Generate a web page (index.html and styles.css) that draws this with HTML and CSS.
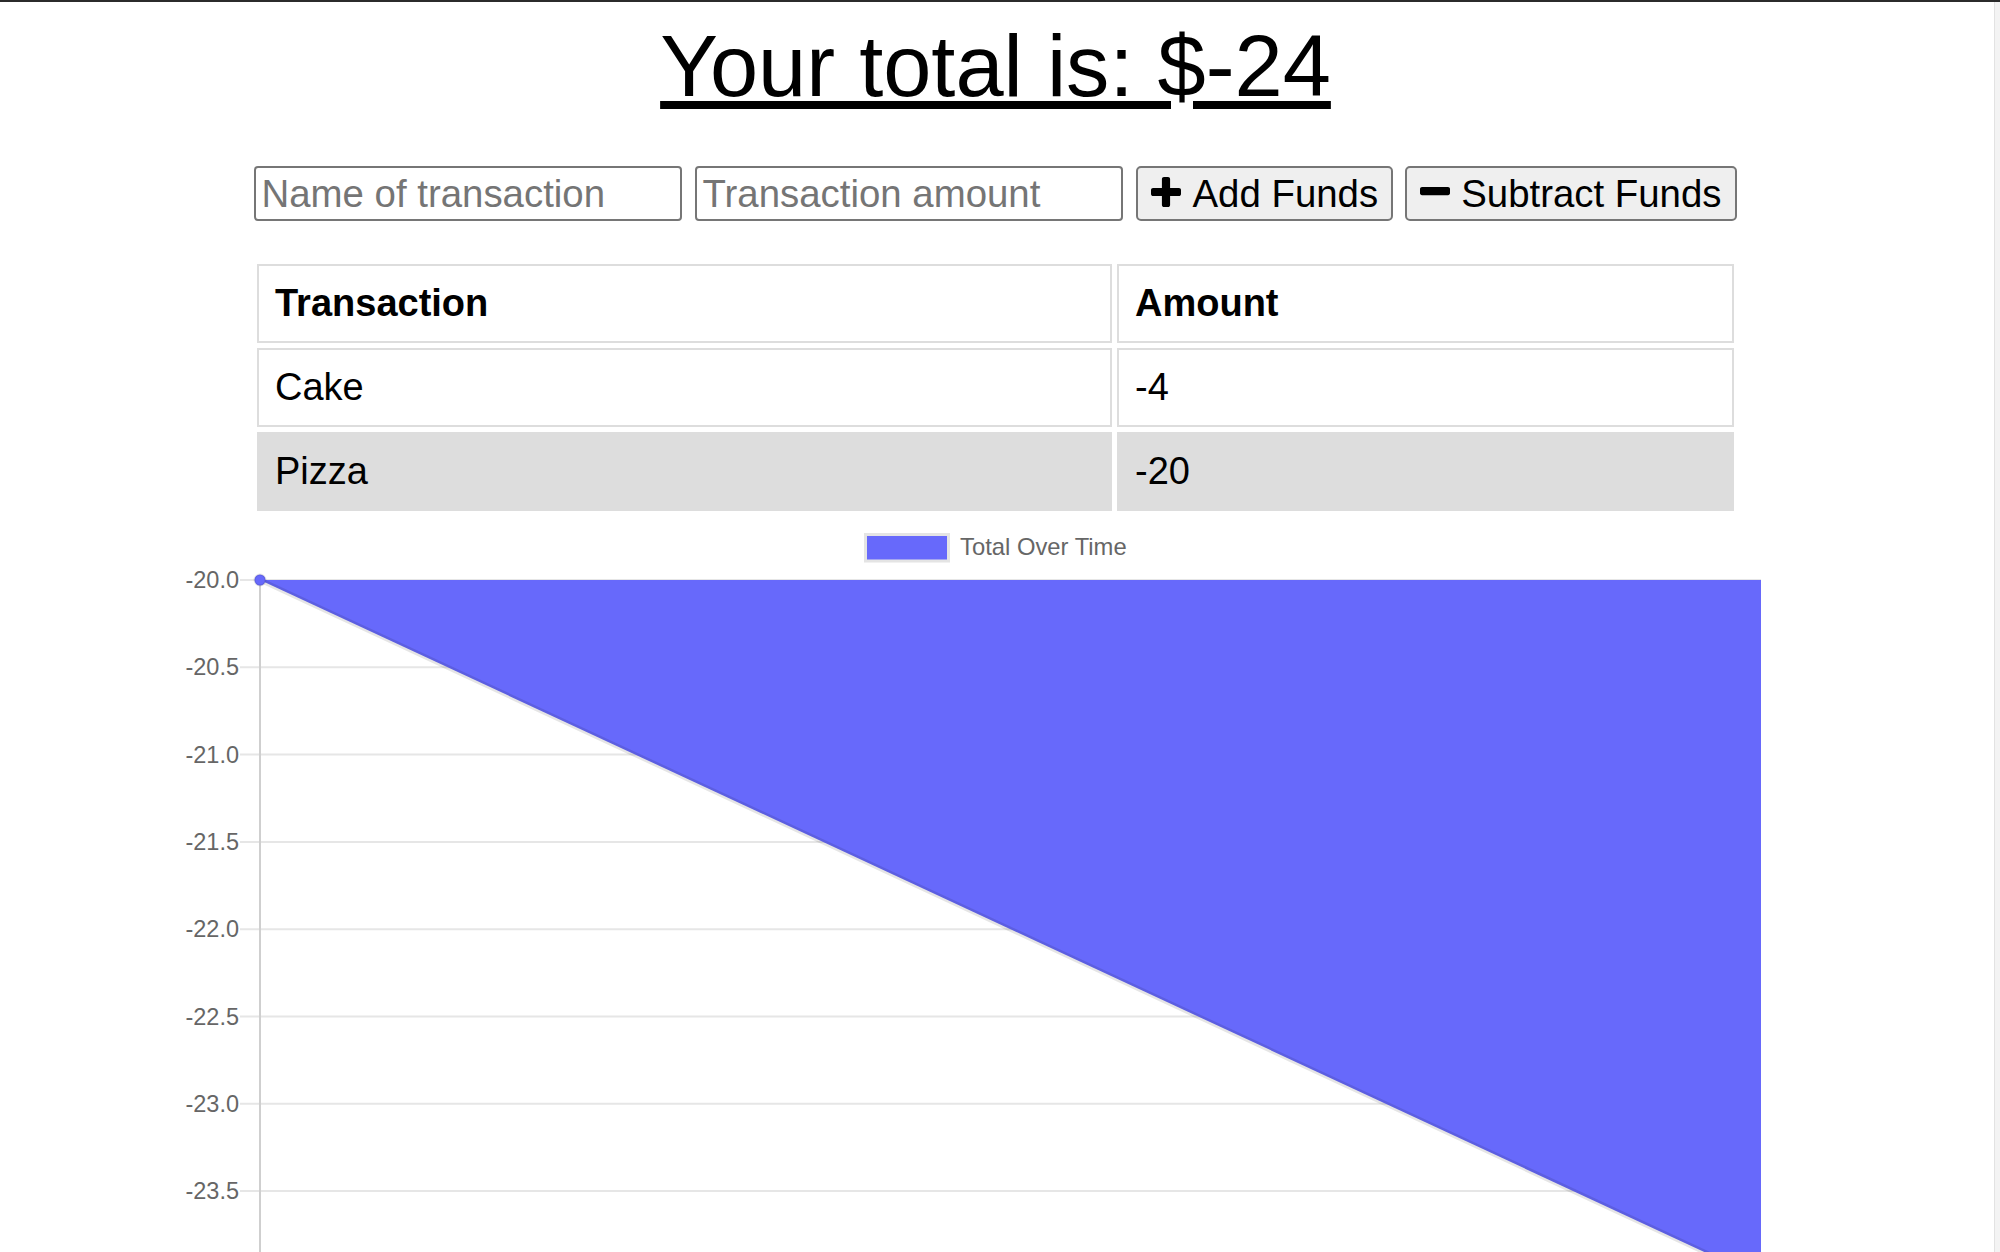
FILE: index.html
```html
<!DOCTYPE html>
<html lang="en">
<head>
<meta charset="utf-8">
<title>Budget Tracker</title>
<link rel="stylesheet" href="styles.css">
</head>
<body>
<div class="window">
  <main class="page">
    <h1 class="total">Your total is: $-24</h1>

    <form class="entry">
      <input class="field" type="text" placeholder="Name of transaction">
      <input class="field" type="text" placeholder="Transaction amount">
      <button class="btn btn-add" type="button">
        <svg class="icon icon-plus" viewBox="0 192 1408 1408" aria-hidden="true"><path d="M1408 800v192q0 40-28 68t-68 28h-416v416q0 40-28 68t-68 28h-192q-40 0-68-28t-28-68v-416h-416q-40 0-68-28t-28-68v-192q0-40 28-68t68-28h416v-416q0-40 28-68t68-28h192q40 0 68 28t28 68v416h416q40 0 68 28t28 68z"/></svg>
        <span>Add Funds</span>
      </button>
      <button class="btn btn-sub" type="button">
        <svg class="icon icon-minus" viewBox="0 704 1408 384" aria-hidden="true"><path d="M1408 800v192q0 40-28 68t-68 28h-1216q-40 0-68-28t-28-68v-192q0-40 28-68t68-28h1216q40 0 68 28t28 68z"/></svg>
        <span>Subtract Funds</span>
      </button>
    </form>

    <table class="ledger">
      <thead>
        <tr><th class="col-name">Transaction</th><th>Amount</th></tr>
      </thead>
      <tbody>
        <tr><td>Cake</td><td>-4</td></tr>
        <tr class="shaded"><td>Pizza</td><td>-20</td></tr>
      </tbody>
    </table>

    <svg class="chart" viewBox="0 516 1991 736" aria-label="Total Over Time chart">
      <g class="legend">
        <rect x="865.5" y="534.5" width="83" height="26.5" fill="#6769fb" stroke="#e4e4e4" stroke-width="3"/>
        <text x="960" y="554.5" class="legend-text">Total Over Time</text>
      </g>
      <g class="grid" stroke="#e6e6e6" stroke-width="2">
        <line x1="240" y1="580" x2="1761" y2="580"/>
        <line x1="240" y1="667.3" x2="1761" y2="667.3"/>
        <line x1="240" y1="754.6" x2="1761" y2="754.6"/>
        <line x1="240" y1="841.9" x2="1761" y2="841.9"/>
        <line x1="240" y1="929.2" x2="1761" y2="929.2"/>
        <line x1="240" y1="1016.5" x2="1761" y2="1016.5"/>
        <line x1="240" y1="1103.8" x2="1761" y2="1103.8"/>
        <line x1="240" y1="1191.1" x2="1761" y2="1191.1"/>
      </g>
      <g class="ticks">
        <text x="239" y="580">-20.0</text>
        <text x="239" y="667.3">-20.5</text>
        <text x="239" y="754.6">-21.0</text>
        <text x="239" y="841.9">-21.5</text>
        <text x="239" y="929.2">-22.0</text>
        <text x="239" y="1016.5">-22.5</text>
        <text x="239" y="1103.8">-23.0</text>
        <text x="239" y="1191.1">-23.5</text>
      </g>
      <line x1="260" y1="580" x2="260" y2="1300" stroke="#cfcfcf" stroke-width="2"/>
      <polygon points="260,580 1761,580 1761,1278.4" fill="#6769fb"/>
      <line x1="260" y1="580" x2="1761" y2="1278.4" stroke="rgba(0,0,0,0.1)" stroke-width="5"/>
      <circle cx="260" cy="580" r="5.5" fill="#6769fb" stroke="rgba(0,0,0,0.1)" stroke-width="2"/>
    </svg>
  </main>
  <div class="scrollbar"></div>
</div>
</body>
</html>
```

FILE: styles.css
```css
html,
body {
  margin: 0;
  height: 1252px;
  overflow: hidden;
  background: #ffffff;
}

body {
  font-family: "Liberation Sans", Arial, sans-serif;
  color: #000000;
}

.window {
  display: flex;
  height: 1250px;
  border-top: 2px solid #2b2b2b;
}

.page {
  flex: 1;
  min-width: 0;
  padding-right: 3px;
  overflow: hidden;
}

.scrollbar {
  width: 5px;
  border-left: 1px solid #e2e2e2;
  background: #f3f3f3;
}

.total {
  margin: 14px 0 0;
  font-size: 86.6px;
  font-weight: normal;
  line-height: 100px;
  text-align: center;
  text-decoration: underline;
}

.entry {
  display: flex;
  justify-content: center;
  align-items: center;
  gap: 13px;
  margin: 50px 0 0;
}

.field {
  box-sizing: border-box;
  width: 428px;
  height: 55px;
  margin: 0;
  padding: 0 4px 0 5px;
  border: 2px solid #767676;
  border-radius: 4px;
  background: #ffffff;
  font-family: "Liberation Sans", Arial, sans-serif;
  font-size: 38.4px;
  color: #000000;
}

.field::placeholder {
  color: #757575;
}

.btn {
  box-sizing: border-box;
  display: inline-flex;
  align-items: center;
  gap: 11px;
  height: 55px;
  margin: 0;
  padding: 0 13px;
  border: 2px solid #767676;
  border-radius: 5px;
  background: #efefef;
  font-family: "Liberation Sans", Arial, sans-serif;
  font-size: 38.4px;
  line-height: 44px;
  color: #000000;
}

.btn-add {
  margin-right: -1px;
}

.icon {
  display: block;
  width: 30px;
  fill: #000000;
  margin-bottom: 4px;
}

.icon-plus {
  height: 30px;
}

.icon-minus {
  height: 8.2px;
}

.ledger {
  table-layout: fixed;
  width: 1487px;
  margin: 38px auto 0;
  border-collapse: separate;
  border-spacing: 5px;
  font-size: 38px;
  line-height: 43px;
}

.ledger th,
.ledger td {
  padding: 16px;
  border: 2px solid #dddddd;
  text-align: left;
}

.ledger th {
  font-weight: bold;
}

.ledger .col-name {
  box-sizing: border-box;
  width: 855px;
}

.ledger .shaded td {
  background: #dddddd;
}

.chart {
  display: block;
  width: 1991px;
  height: 736px;
}

.legend-text {
  font-family: "Liberation Sans", Arial, sans-serif;
  font-size: 23.8px;
  fill: #666666;
}

.ticks text {
  font-family: "Liberation Sans", Arial, sans-serif;
  font-size: 23.5px;
  fill: #666666;
  text-anchor: end;
  dominant-baseline: central;
}
```
